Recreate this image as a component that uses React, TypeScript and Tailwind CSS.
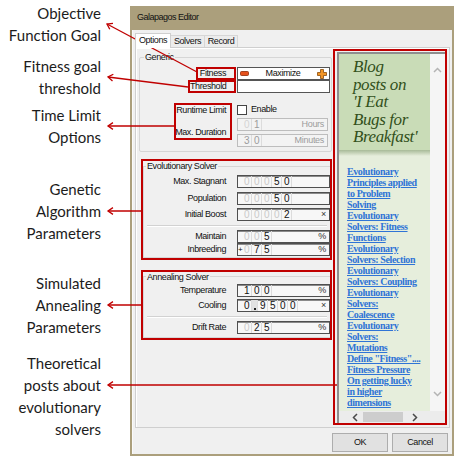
import React from "react";

const RED = "#c00000";

// annotation arrows: start (on the dialog) -> tip (next to the caption)
const arrows: [number, number, number, number][] = [
  [197, 72, 107, 24],
  [188, 87, 108, 77],
  [174, 126, 108, 126],
  [141, 211, 108, 211],
  [141, 305, 108, 305],
  [337, 385, 108, 385],
];

const links: string[][] = [
  ["Evolutionary", "Principles applied", "to Problem", "Solving"],
  ["Evolutionary", "Solvers: Fitness", "Functions"],
  ["Evolutionary", "Solvers: Selection"],
  ["Evolutionary", "Solvers: Coupling"],
  ["Evolutionary", "Solvers:", "Coalescence"],
  ["Evolutionary", "Solvers:", "Mutations"],
  ['Define "Fitness"....'],
  ["Fitness Pressure"],
  ["On getting lucky", "in higher", "dimensions"],
];

function Arrow({ x1, y1, x2, y2 }: { x1: number; y1: number; x2: number; y2: number }) {
  const a = Math.atan2(y1 - y2, x1 - x2);
  const len = 6;
  const spread = 0.6;
  const ax = x2 + len * Math.cos(a + spread);
  const ay = y2 + len * Math.sin(a + spread);
  const bx = x2 + len * Math.cos(a - spread);
  const by = y2 + len * Math.sin(a - spread);
  return (
    <g>
      <line x1={x1} y1={y1} x2={x2} y2={y2} />
      <polyline points={`${ax},${ay} ${x2},${y2} ${bx},${by}`} fill="none" />
    </g>
  );
}

interface NumProps {
  lead?: string;
  value?: string;
  sign?: string;
  suffix?: string;
  disabled?: boolean;
  wide?: boolean;
}

function NumBox({ lead = "", value = "", sign = "", suffix = "", disabled = false, wide = true }: NumProps) {
  const frame = disabled
    ? "border-[#bdbdbd] bg-[#f3f3f3]"
    : "border-[#4f4f4f] bg-[#f7f7f7] shadow-[inset_0_1px_0_#8a8a8a]";
  const ink = disabled ? "text-[#9c9c9c]" : "text-[#111111]";
  const faint = disabled ? "text-[#d4d4d4]" : "text-[#c9c9c9]";
  return (
    <div className={`flex h-[13px] ${wide ? "w-[93px]" : "w-[91px]"} border ${frame} text-[10px] leading-[11px]`}>
      <span className={`w-[4px] text-center text-[8px] leading-[11px] ${ink}`}>{sign}</span>
      {lead.split("").map((c, i) => (
        <span key={"l" + i} className={`w-[10px] border-r border-[#dcdcdc] text-center ${faint}`}>
          {c}
        </span>
      ))}
      {value.split("").map((c, i) =>
        c === "." ? (
          <span key={"v" + i} className="w-[6px] border-r border-[#dcdcdc] bg-[#e2e2e2] flex items-end justify-center pb-[1px]">
            <span className="w-[2px] h-[2px] bg-[#222222]" />
          </span>
        ) : (
          <span key={"v" + i} className={`w-[10px] border-r border-[#dcdcdc] text-center ${ink}`}>
            {c}
          </span>
        )
      )}
      <span className={`flex-1 text-right pr-[3px] text-[9px] tracking-[-0.3px] ${disabled ? "text-[#9c9c9c]" : "text-[#333333]"}`}>
        {suffix}
      </span>
    </div>
  );
}

function Row({ label, children, className = "" }: { label: string; children: React.ReactNode; className?: string }) {
  return (
    <div className={`flex items-center justify-end ${className}`}>
      <span className="mr-[11px] whitespace-nowrap">{label}</span>
      {children}
    </div>
  );
}

function Separator({ className = "" }: { className?: string }) {
  return <div className={`mx-[3px] h-[2px] border-t border-[#d2d2d2] border-b border-b-white ${className}`} />;
}

function Chevron({ dir, className = "" }: { dir: "up" | "down" | "left" | "right"; className?: string }) {
  const pts = {
    up: "1,5 4.5,1.5 8,5",
    down: "1,1 4.5,4.5 8,1",
    left: "5,1 1.5,4.5 5,8",
    right: "1,1 4.5,4.5 1,8",
  }[dir];
  const vertical = dir === "up" || dir === "down";
  return (
    <svg width={vertical ? 9 : 6} height={vertical ? 6 : 9} viewBox={vertical ? "0 0 9 6" : "0 0 6 9"} className={className}>
      <polyline points={pts} fill="none" stroke="currentColor" strokeWidth={1.5} />
    </svg>
  );
}

function GenericGroup() {
  return (
    <fieldset className="min-w-0 border border-[#d6d6d6] rounded-[2px] pr-[1px] pt-[5px] pb-[4px]">
      <legend className="ml-[4px] px-[1px] leading-[10px]">Generic</legend>
      <div className="flex items-center justify-end h-[13px]">
        <span className="w-[40px] h-[13px] border-2 border-[#c00000] text-right pr-[8px] leading-[9px]">Fitness</span>
        <div className="ml-[1px] w-[93px] h-[13px] border border-[#555555] bg-white flex items-center">
          <svg width="9" height="5" viewBox="0 0 9 5" className="ml-[2px]">
            <rect x="0.5" y="0.5" width="8" height="4" rx="1" fill="#e5501b" stroke="#8a2a08" strokeWidth="0.8" />
          </svg>
          <span className="flex-1 text-center">Maximize</span>
          <svg width="10" height="10" viewBox="0 0 10 10" className="mr-[2px]">
            <path
              d="M3.5 0.5h3v3h3v3h-3v3h-3v-3h-3v-3h3z"
              fill="#f29424"
              stroke="#8a4a08"
              strokeWidth="0.8"
            />
          </svg>
        </div>
      </div>
      <div className="flex items-center justify-end h-[13px]">
        <span className="w-[48px] h-[13px] border-2 border-[#c00000] text-right pr-[8px] leading-[9px]">Threshold</span>
        <div className="ml-[1px] w-[93px] h-[13px] border border-[#555555] bg-white" />
      </div>
      <div className="flex items-start justify-end mt-[10px]">
        <div className="w-[58px] h-[37px] border-2 border-[#c00000] flex flex-col items-end pr-[4px] leading-[10px]">
          <span className="whitespace-nowrap">Runtime Limit</span>
          <span className="whitespace-nowrap mt-[12px]">Max. Duration</span>
        </div>
        <div className="ml-[5px] w-[93px] pt-[1px]">
          <div className="flex items-center h-[12px]">
            <span className="w-[10px] h-[10px] border border-[#444444] bg-white" />
            <span className="ml-[4px]">Enable</span>
          </div>
          <div className="mt-[2px]">
            <NumBox lead="0" value="1" suffix="Hours" disabled wide={false} />
          </div>
          <div className="mt-[3px]">
            <NumBox value="30" suffix="Minutes" disabled wide={false} />
          </div>
        </div>
      </div>
    </fieldset>
  );
}

function EvolutionaryGroup() {
  return (
    <div className="mt-[7px] ml-[2px] w-[191px] border-2 border-[#c00000]">
      <fieldset className="min-w-0 border border-[#d6d6d6] border-r-0 pt-[4px]">
        <legend className="ml-[2px] px-[1px] leading-[10px]">Evolutionary Solver</legend>
        <Row label="Max. Stagnant">
          <NumBox lead="000" value="50" />
        </Row>
        <Row label="Population" className="mt-[3px]">
          <NumBox lead="000" value="50" />
        </Row>
        <Row label="Initial Boost" className="mt-[3px]">
          <NumBox lead="0000" value="2" suffix="×" />
        </Row>
        <Separator className="mt-[3px]" />
        <Row label="Maintain" className="mt-[3px]">
          <NumBox lead="00" value="5" suffix="%" />
        </Row>
        <Row label="Inbreeding">
          <NumBox sign="+" lead="0" value="75" suffix="%" />
        </Row>
      </fieldset>
    </div>
  );
}

function AnnealingGroup() {
  return (
    <div className="mt-[10px] ml-[2px] w-[191px] border-2 border-[#c00000]">
      <fieldset className="min-w-0 border border-[#d6d6d6] border-r-0 pt-[2px] pb-[3px]">
        <legend className="ml-[2px] px-[1px] leading-[10px]">Annealing Solver</legend>
        <Row label="Temperature">
          <NumBox value="100" suffix="%" />
        </Row>
        <Row label="Cooling" className="mt-[2px]">
          <NumBox value="0.9500" suffix="×" />
        </Row>
        <Separator className="mt-[3px]" />
        <Row label="Drift Rate" className="mt-[3px]">
          <NumBox lead="0" value="25" suffix="%" />
        </Row>
      </fieldset>
    </div>
  );
}

function BlogPanel() {
  return (
    <div className="mt-[1px] ml-[1px] w-[114px] h-[376px] border-2 border-[#c00000] pl-[2px] pt-[1px]">
      <div className="h-full border-t-2 border-l-2 border-[#8e8e8e] flex flex-col">
        <div className="flex flex-1 min-h-0">
          <div className="w-[91px] flex flex-col bg-[#e6eedc] overflow-hidden">
            <div className="h-[96px] shrink-0 bg-[#c9dcb7] pl-[14px] pt-[4px] font-['Liberation_Serif',Georgia,serif] italic text-[17px] leading-[17.5px] text-[#32501b] whitespace-nowrap">
              Blog
              <br />
              posts on
              <br />
              'I Eat
              <br />
              Bugs for
              <br />
              Breakfast'
            </div>
            <div className="h-[6px] shrink-0 bg-gradient-to-b from-[#a8ba98] to-[#e6eedc]" />
            <div className="pl-[8px] pt-[10px] font-['Liberation_Serif',Georgia,serif] font-bold text-[10px] leading-[11px] text-[#2f74d6]">
              {links.map((lines, i) => (
                <a key={i} className="block cursor-pointer">
                  {lines.map((line, j) => (
                    <span key={j} className="block underline whitespace-nowrap">
                      {line}
                    </span>
                  ))}
                </a>
              ))}
            </div>
          </div>
          <div className="flex-1 bg-[#f5f5f5] flex flex-col items-center justify-between pt-[13px] pb-[14px] text-[#b4b4b4]">
            <Chevron dir="up" />
            <Chevron dir="down" />
          </div>
        </div>
        <div className="h-[12px] shrink-0 bg-[#ececec] flex items-center text-[#4a4a4a]">
          <Chevron dir="left" className="ml-[13px]" />
          <span className="ml-[5px] w-[40px] h-[10px] bg-[#cdcdcd]" />
          <Chevron dir="right" className="ml-[9px]" />
        </div>
      </div>
    </div>
  );
}

function Dialog() {
  return (
    <div className="mt-[6px] w-[324px] h-[450px] shrink-0 flex flex-col bg-[#ab9f7c] px-[2px] pb-[2px] text-[9px] tracking-[-0.4px] text-[#111111]">
      <div className="h-[24px] shrink-0 pl-[5px] flex items-center text-[#111111] tracking-[-0.5px]">Galapagos Editor</div>
      <div className="flex-1 bg-[#f0f0f0] flex flex-col pl-[3px] pr-[2px] pt-[3px] shadow-[inset_1px_0_0_#fafafa]">
        {/* Tabs */}
        <div className="flex items-end h-[14px]">
          <div className="relative z-10 mb-[-1px] w-[36px] h-[15px] border border-b-0 border-[#cfcfcf] bg-white flex items-center justify-center">
            Options
          </div>
          <div className="w-[34px] h-[12px] border border-l-0 border-b-0 border-[#d6d6d6] bg-[#ececec] flex items-center justify-center">
            Solvers
          </div>
          <div className="w-[33px] h-[12px] border border-l-0 border-b-0 border-[#d6d6d6] bg-[#ececec] flex items-center justify-center">
            Record
          </div>
        </div>

        {/* Options page */}
        <div className="h-[381px] shrink-0 border border-[#cfcfcf] bg-[#f0f0f0] shadow-[inset_1px_1px_0_#ffffff] flex pl-[3px]">
          <div className="w-[193px] pt-[4px]">
            <GenericGroup />
            <EvolutionaryGroup />
            <AnnealingGroup />
          </div>
          <BlogPanel />
        </div>

        {/* Buttons */}
        <div className="mt-[5px] flex justify-end gap-[4px] pr-[2px]">
          <button className="w-[56px] h-[19px] border border-[#adadad] bg-[#e1e1e1] text-[9px]">OK</button>
          <button className="w-[56px] h-[19px] border border-[#adadad] bg-[#e1e1e1] text-[9px]">Cancel</button>
        </div>
      </div>
    </div>
  );
}

export default function App() {
  return (
    <div className="relative w-[456px] h-[460px] overflow-hidden bg-white flex font-['Liberation_Sans',Arial,sans-serif]">
      {/* Captions */}
      <div className="w-[130px] shrink-0 pr-[29px] text-right font-['Lato','Open_Sans',sans-serif] text-[15px] leading-[22px] text-[#1c1c1c]">
        <p className="mt-[2px]">
          Objective
          <br />
          Function Goal
        </p>
        <p className="mt-[9px]">
          Fitness goal
          <br />
          threshold
        </p>
        <p className="mt-[5px]">
          Time Limit
          <br />
          Options
        </p>
        <p className="mt-[30px]">
          Genetic
          <br />
          Algorithm
          <br />
          Parameters
        </p>
        <p className="mt-[28px]">
          Simulated
          <br />
          Annealing
          <br />
          Parameters
        </p>
        <p className="mt-[14px]">
          Theoretical
          <br />
          posts about
          <br />
          evolutionary
          <br />
          solvers
        </p>
      </div>

      <Dialog />

      {/* Annotation arrows */}
      <svg
        className="absolute left-0 top-0 pointer-events-none"
        width={456}
        height={460}
        stroke={RED}
        strokeWidth={1.3}
      >
        {arrows.map(([x1, y1, x2, y2], i) => (
          <Arrow key={i} x1={x1} y1={y1} x2={x2} y2={y2} />
        ))}
      </svg>
    </div>
  );
}
